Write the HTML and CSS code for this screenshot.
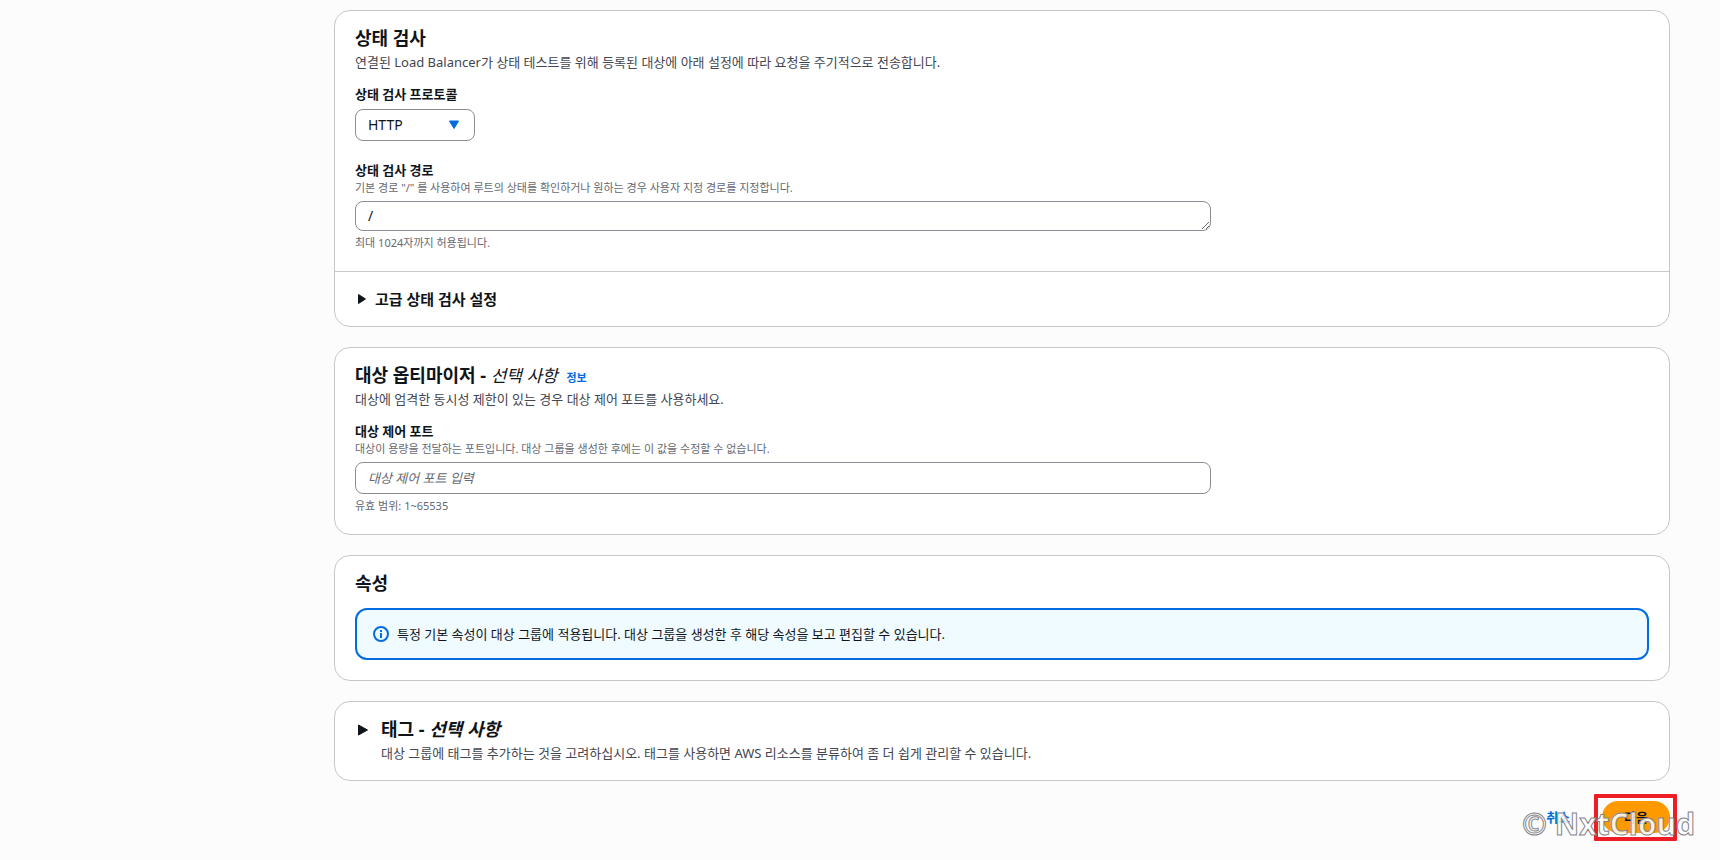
FILE: index.html
```html
<!DOCTYPE html>
<html lang="ko">
<head>
<meta charset="utf-8">
<title>대상 그룹 생성</title>
<link rel="stylesheet" href="styles.css">
</head>
<body>
<main class="page">
  <section class="card">
    <div class="card-body">
      <h2 class="title">상태 검사</h2>
      <p class="desc">연결된 Load Balancer가 상태 테스트를 위해 등록된 대상에 아래 설정에 따라 요청을 주기적으로 전송합니다.</p>
      <div class="field">
        <label class="label" for="protocol">상태 검사 프로토콜</label>
        <div class="select">
          <select id="protocol" class="control"><option>HTTP</option></select>
          <svg class="caret" width="12" height="10" viewBox="0 0 12 10" aria-hidden="true"><path d="M1.5 1h9L6 8.5z" fill="#006ce0" stroke="#006ce0" stroke-linejoin="round"/></svg>
        </div>
      </div>
      <div class="field field-next">
        <label class="label" for="path">상태 검사 경로</label>
        <p class="hint">기본 경로 "/" 를 사용하여 루트의 상태를 확인하거나 원하는 경우 사용자 지정 경로를 지정합니다.</p>
        <div class="columns"><textarea id="path" class="control path" rows="1">/</textarea></div>
        <p class="hint hint-below">최대 1024자까지 허용됩니다.</p>
      </div>
    </div>
    <button class="expander" type="button">
      <svg width="10" height="12" viewBox="0 0 10 12" aria-hidden="true"><path d="M1.5 1.5v9L8.500 6z" fill="#0f141a" stroke="#0f141a" stroke-linejoin="round"/></svg>
      고급 상태 검사 설정
    </button>
  </section>

  <section class="card">
    <div class="card-body">
      <h2 class="title">대상 옵티마이저 - <i class="optional">선택 사항</i> <a class="info" href="#">정보</a></h2>
      <p class="desc">대상에 엄격한 동시성 제한이 있는 경우 대상 제어 포트를 사용하세요.</p>
      <div class="field">
        <label class="label" for="port">대상 제어 포트</label>
        <p class="hint">대상이 용량을 전달하는 포트입니다. 대상 그룹을 생성한 후에는 이 값을 수정할 수 없습니다.</p>
        <div class="columns"><input id="port" class="control" type="text" placeholder="대상 제어 포트 입력"></div>
        <p class="hint hint-below">유효 범위: 1~65535</p>
      </div>
    </div>
  </section>

  <section class="card">
    <div class="card-body">
      <h2 class="title">속성</h2>
      <div class="alert">
        <svg width="16" height="16" viewBox="0 0 16 16" fill="none" stroke="#006ce0" stroke-width="2" aria-hidden="true"><circle cx="8" cy="8" r="7"/><path d="M8 7v5M8 4v2"/></svg>
        <span>특정 기본 속성이 대상 그룹에 적용됩니다. 대상 그룹을 생성한 후 해당 속성을 보고 편집할 수 있습니다.</span>
      </div>
    </div>
  </section>

  <section class="card tags">
    <svg class="tags-arrow" width="12" height="14" viewBox="0 0 12 14" aria-hidden="true"><path d="M1.500 2v10L10.500 7z" fill="#0f141a" stroke="#0f141a" stroke-linejoin="round"/></svg>
    <div>
      <h2 class="title">태그 - <i>선택 사항</i></h2>
      <p class="desc">대상 그룹에 태그를 추가하는 것을 고려하십시오. 태그를 사용하면 AWS 리소스를 분류하여 좀 더 쉽게 관리할 수 있습니다.</p>
    </div>
  </section>

  <footer class="actions">
    <button class="cancel" type="button">취소</button>
    <div class="next-wrap"><button class="next" type="button">다음</button></div>
    <div class="watermark">© NxtCloud</div>
  </footer>
</main>
</body>
</html>
```
FILE: styles.css
```css
* { box-sizing: border-box; }

body {
  margin: 0;
  background: #fcfcfd;
  color: #0f141a;
  font: 13px/20px "Noto Sans", "Noto Sans CJK KR", sans-serif;
}

button, input, select, textarea { font: inherit; color: inherit; }
h2, p { margin: 0; }

.page {
  display: flex;
  flex-direction: column;
  gap: 20px;
  padding: 10px 50px 27px 334px;
}

.card {
  background: #fff;
  border: 1px solid #c6c6cd;
  border-radius: 16px;
}
.card-body { padding: 16px 20px 20px; }

.title { font-size: 18px; line-height: 23px; font-weight: 700; }
.optional { font-size: 17px; line-height: 1; font-weight: 400; }
.info { margin-left: 4px; font-size: 11px; line-height: 1; color: #006ce0; text-decoration: none; }
.desc { line-height: 24px; color: #424650; }

.field { margin-top: 11px; }
.field-next { margin-top: 20px; }
.label { display: block; line-height: 18px; font-weight: 700; }
.hint { margin-top: 1px; font-size: 11px; line-height: 16px; color: #656871; }
.hint-below { margin-top: 4px; }

.control {
  display: block;
  width: 100%;
  height: 32px;
  padding: 4px 12px;
  border: 1px solid #8c8c94;
  border-radius: 8px;
  background: #fff;
}
.control::placeholder { color: #656871; font-style: italic; opacity: 1; }
.path { height: 30px; font-size: 14px; overflow: hidden; resize: vertical; }

.select { position: relative; width: 120px; margin-top: 6px; }
.select .control { appearance: none; font-size: 14px; }
.caret { position: absolute; right: 15px; top: 11px; pointer-events: none; }

.columns {
  display: grid;
  grid-template-columns: 2fr 1fr;
  gap: 10px;
  margin-top: 5px;
}

.expander {
  display: flex;
  align-items: center;
  gap: 8px;
  width: 100%;
  height: 55px;
  padding: 0 22px;
  border: 0;
  border-top: 1px solid #c6c6cd;
  background: none;
  font-size: 15px;
  font-weight: 700;
}

.alert {
  display: flex;
  align-items: center;
  gap: 8px;
  min-height: 52px;
  margin-top: 13px;
  padding: 0 16px;
  border: 2px solid #006ce0;
  border-radius: 12px;
  background: #f0fbff;
}

.tags { display: flex; gap: 12px; padding: 16px 22px 15px; }
.tags-arrow { flex: none; margin-top: 5px; }

.actions {
  position: relative;
  display: flex;
  justify-content: flex-end;
  align-items: center;
  gap: 32px;
}
.cancel { padding: 0; border: 0; background: none; color: #006ce0; font-weight: 700; }
.next-wrap { position: relative; }
.next-wrap::after {
  content: "";
  position: absolute;
  inset: -7px -7px -8px -8px;
  border: 4px solid #ee1c25;
  border-radius: 1px;
}
.next {
  display: block;
  height: 32px;
  padding: 0 22px;
  border: 0;
  border-radius: 16px;
  background: #ff9900;
  font-weight: 700;
}
.watermark {
  position: absolute;
  right: -25px;
  top: 3px;
  font-size: 30px;
  line-height: 40px;
  font-weight: 700;
  color: rgba(255, 255, 255, 0.85);
  -webkit-text-stroke: 1px #85858a;
  white-space: nowrap;
  pointer-events: none;
}
```
